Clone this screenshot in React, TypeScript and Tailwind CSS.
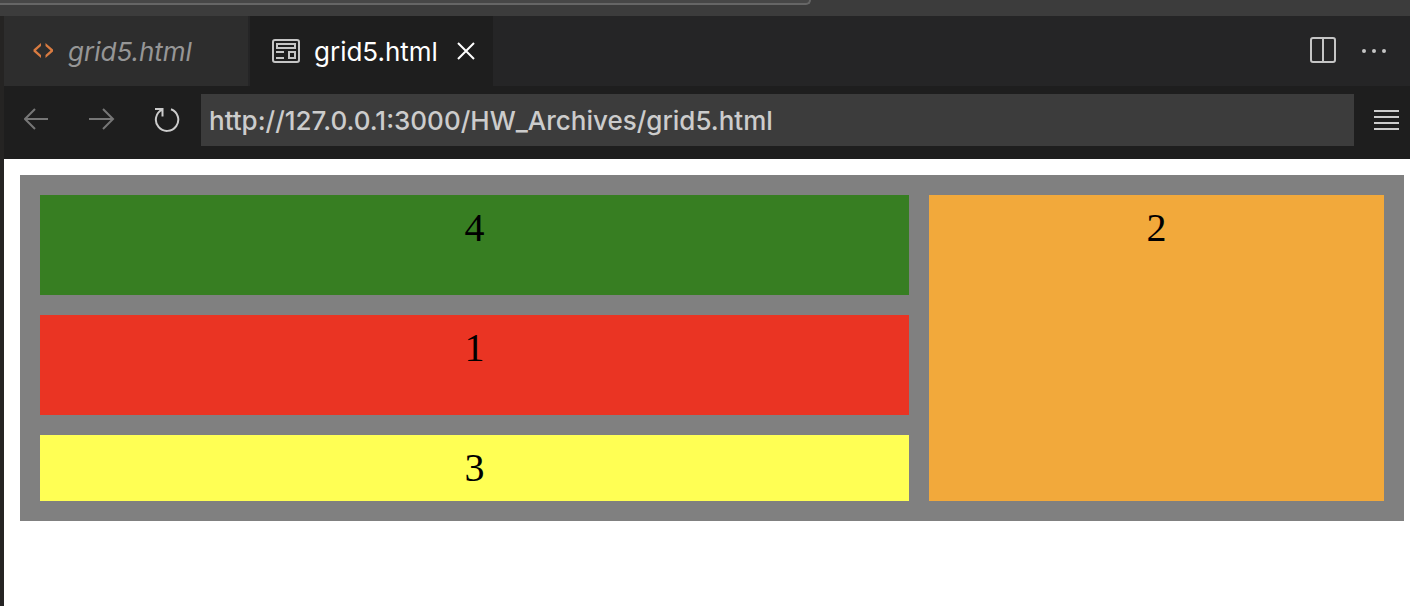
import type { ReactNode } from "react";

type IconProps = { className?: string; children: ReactNode; width: number; height: number };

function Icon({ className = "", children, width, height }: IconProps) {
  return (
    <svg
      className={`shrink-0 ${className}`}
      width={width}
      height={height}
      viewBox={`0 0 ${width} ${height}`}
      fill="none"
      stroke="currentColor"
      strokeWidth="2"
      aria-hidden="true"
    >
      {children}
    </svg>
  );
}

function TabBar() {
  return (
    <header className="flex h-[70px] items-stretch bg-[#252526]">
      <div role="tablist" className="flex">
        <button
          role="tab"
          aria-selected="false"
          className="flex w-[246px] items-center gap-3 border-r-2 border-[#252526] bg-[#2d2d2d] pl-7 text-[26px] font-normal text-[#969696] italic"
        >
          <Icon width={24} height={20} className="text-[#d87b41]">
            <path
              d="M9 2v3L4 9.500 9 14v3L1.500 10.500v-2zM13.500 2v3l5 4.500-5 4.500v3l7.500-6.500v-2z"
              fill="currentColor"
              stroke="none"
            />
          </Icon>
          <span>grid5.html</span>
        </button>
        <div className="flex w-[243px] items-center bg-[#1e1e1e] pl-[22px] text-[26px] font-normal text-white">
          <button role="tab" aria-selected="true" className="flex items-center gap-[14px]">
            <Icon width={28} height={24} className="text-[#c5c5c5]">
              <rect x="1" y="1" width="26" height="22" rx="2" />
              <rect x="5" y="5" width="18" height="4" />
              <path d="M4 13h8M4 19h8" />
              <rect x="17" y="13" width="6" height="6" />
            </Icon>
            <span>grid5.html</span>
          </button>
          <button aria-label="Close tab" className="mr-[18px] ml-auto">
            <Icon width={18} height={18}>
              <path d="m1 1 16 16M17 1 1 17" />
            </Icon>
          </button>
        </div>
      </div>
      <div className="ml-auto flex items-center gap-6 pr-[22px] text-[#c5c5c5]">
        <button aria-label="Split editor">
          <Icon width={26} height={28}>
            <rect x="1" y="1" width="24" height="24" rx="2" />
            <path d="M13 1v24" />
          </Icon>
        </button>
        <button aria-label="More actions">
          <Icon width={28} height={6}>
            <g fill="currentColor" stroke="none">
              <circle cx="4" cy="3" r="2" />
              <circle cx="14" cy="3" r="2" />
              <circle cx="24" cy="3" r="2" />
            </g>
          </Icon>
        </button>
      </div>
    </header>
  );
}

function AddressBar() {
  return (
    <nav className="flex h-[73px] items-center bg-[#1e1e1e] pr-[10px] pb-[5px] pl-5 text-[#cccccc]">
      <div className="flex items-center gap-[38px] pr-[21px]">
        <button aria-label="Back" className="text-[#767676]">
          <Icon width={26} height={24}>
            <path d="M24 11H1M11 1 1 11l10 10" />
          </Icon>
        </button>
        <button aria-label="Forward" className="text-[#767676]">
          <Icon width={28} height={24}>
            <path d="M1 11h24M15 1l10 10-10 10" />
          </Icon>
        </button>
        <button aria-label="Reload">
          <Icon width={26} height={26}>
            <path d="M17 2.200A11.200 11.200 0 1 1 8.200 2.600M1 2h7.500v7.500" />
          </Icon>
        </button>
      </div>
      <input
        aria-label="Address"
        defaultValue="http://127.0.0.1:3000/HW_Archives/grid5.html"
        className="h-[52px] min-w-0 flex-1 bg-[#3c3c3c] px-2 text-[26px] font-[450] text-[#cccccc] outline-none"
      />
      <button aria-label="Menu" className="ml-5">
        <Icon width={26} height={22}>
          <path d="M0 2h25M0 8h25M0 14h25M0 20h25" />
        </Icon>
      </button>
    </nav>
  );
}

function Page() {
  return (
    <main className="flex-1 bg-white pt-4 pr-[6px] pl-4 font-['Liberation_Serif',serif] text-[40px] leading-[46px] text-black">
      <div className="grid grid-cols-[869fr_455fr] grid-rows-[100px_100px_66px] gap-5 bg-[#808080] p-5 text-center">
        <div className="bg-[#377e22] pt-[10px]">4</div>
        <div className="row-span-3 bg-[#f2a93b] pt-[10px]">2</div>
        <div className="bg-[#ea3423] pt-[10px]">1</div>
        <div className="bg-[#ffff54] pt-[10px]">3</div>
      </div>
    </main>
  );
}

export default function App() {
  return (
    <div className="flex min-h-screen flex-col bg-[#252423] font-[Inter,sans-serif]">
      <div className="h-4 bg-[#3c3c3c]">
        <div className="h-[5px] w-[811px] max-w-full rounded-br-lg border-r-2 border-b-2 border-[#666666] bg-[#474747]" />
      </div>
      <div className="flex flex-1 flex-col pl-1">
        <TabBar />
        <AddressBar />
        <Page />
      </div>
    </div>
  );
}
